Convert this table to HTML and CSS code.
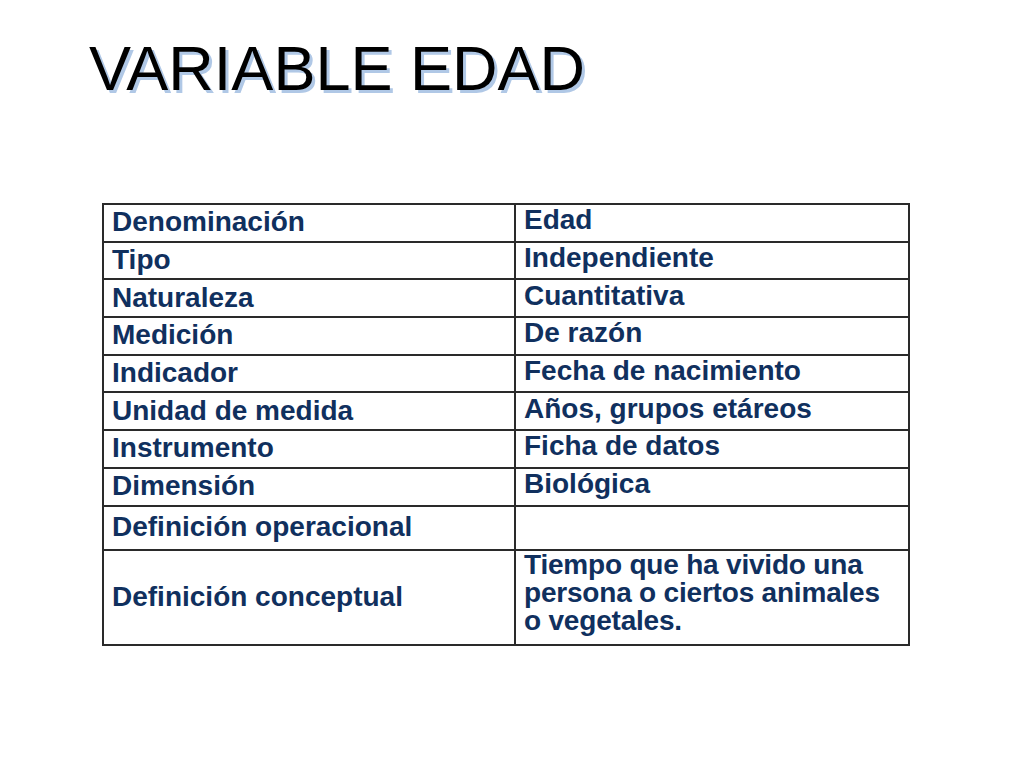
FILE: index.html
```html
<!DOCTYPE html>
<html lang="es">
<head>
<meta charset="utf-8">
<title>Variable Edad</title>
<link rel="stylesheet" href="styles.css">
</head>
<body>
<div class="slide">
  <h1 class="title">VARIABLE EDAD</h1>
  <table class="var-table">
    <tr><td class="k">Denominación</td><td class="v">Edad</td></tr>
    <tr><td class="k">Tipo</td><td class="v">Independiente</td></tr>
    <tr><td class="k">Naturaleza</td><td class="v">Cuantitativa</td></tr>
    <tr><td class="k">Medición</td><td class="v">De razón</td></tr>
    <tr><td class="k">Indicador</td><td class="v">Fecha de nacimiento</td></tr>
    <tr><td class="k">Unidad de medida</td><td class="v">Años, grupos etáreos</td></tr>
    <tr><td class="k">Instrumento</td><td class="v">Ficha de datos</td></tr>
    <tr><td class="k">Dimensión</td><td class="v">Biológica</td></tr>
    <tr class="tall"><td class="k">Definición operacional</td><td class="v"></td></tr>
    <tr class="big"><td class="k">Definición conceptual</td><td class="v multi">Tiempo que ha vivido una<br>persona o ciertos animales<br>o vegetales.</td></tr>
  </table>
</div>
</body>
</html>
```

FILE: styles.css
```css
html, body {
  margin: 0;
  padding: 0;
  background: #ffffff;
}

.slide {
  width: 1024px;
  height: 768px;
  padding-top: 37px;
  box-sizing: border-box;
  font-family: "Liberation Sans", Arial, sans-serif;
}

.title {
  margin: 0 0 0 89px;
  font-size: 63px;
  font-weight: normal;
  line-height: 62px;
  color: #000000;
  text-shadow: 3px 3px 0 #b0c8e6;
}

.var-table {
  margin: 104px 0 0 102px;
  border-collapse: collapse;
  table-layout: fixed;
  width: 808px;
}

.var-table td {
  border: 2px solid #2a2a2a;
  height: 30.7px;
  padding: 0 8px;
  font-size: 28px;
  font-weight: bold;
  line-height: 28px;
  color: #10305e;
  vertical-align: middle;
}

.var-table td.k {
  width: 394px;
  padding-bottom: 1px;
}

.var-table td.v {
  padding-bottom: 5px;
}

.var-table tr.tall td {
  height: 37px;
}

.var-table tr.big td {
  height: 92px;
}

.var-table td.multi {
  vertical-align: top;
  padding: 0 8px;
  line-height: 28px;
  letter-spacing: -0.2px;
}
```
